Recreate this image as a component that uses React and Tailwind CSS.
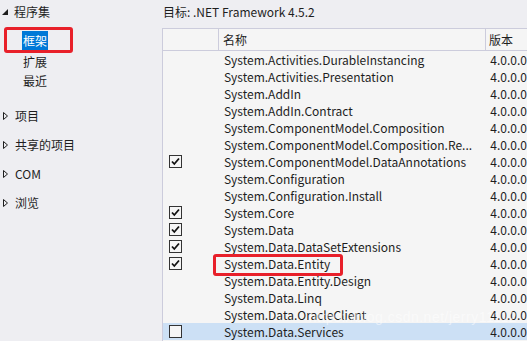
import React from "react";

const rows = [
  { name: "System.Activities.DurableInstancing" },
  { name: "System.Activities.Presentation" },
  { name: "System.AddIn" },
  { name: "System.AddIn.Contract" },
  { name: "System.ComponentModel.Composition" },
  { name: "System.ComponentModel.Composition.Re..." },
  { name: "System.ComponentModel.DataAnnotations", checked: true },
  { name: "System.Configuration" },
  { name: "System.Configuration.Install" },
  { name: "System.Core", checked: true },
  { name: "System.Data", checked: true },
  { name: "System.Data.DataSetExtensions", checked: true },
  { name: "System.Data.Entity", checked: true, marked: true },
  { name: "System.Data.Entity.Design" },
  { name: "System.Data.Linq" },
  { name: "System.Data.OracleClient" },
  { name: "System.Data.Services", box: true, selected: true },
];

function Expanded() {
  return (
    <svg width="6" height="6" viewBox="0 0 6 6" className="shrink-0">
      <path d="M6 0 L6 6 L0 6 Z" fill="#1e1e1e" />
    </svg>
  );
}

function Collapsed() {
  return (
    <svg width="5" height="8" viewBox="0 0 5 8" className="shrink-0">
      <path d="M0.5 0.5 L4.5 4 L0.5 7.5 Z" fill="none" stroke="#1e1e1e" strokeWidth="1" />
    </svg>
  );
}

function Check({ on }) {
  return (
    <div className="w-[13px] h-[13px] border border-[#333] bg-[#f5f5f5] flex items-center justify-center">
      {on && (
        <svg width="11" height="11" viewBox="0 0 11 11">
          <path d="M2 5.5 L4.3 8 L9 2.5" fill="none" stroke="#111" strokeWidth="1.8" />
        </svg>
      )}
    </div>
  );
}

function TreeItem({ label, top }) {
  return (
    <div className={`flex items-center gap-[7px] pl-[3px] h-[17px] ${top}`}>
      <Collapsed />
      <span>{label}</span>
    </div>
  );
}

export default function App() {
  return (
    <div
      className="w-[527px] h-[341px] flex overflow-hidden bg-[#eeeef2] text-[12px] text-[#1e1e1e]"
      style={{ fontFamily: '"Noto Sans CJK SC", "Noto Sans", sans-serif' }}
    >
      <div className="w-[162px] shrink-0 pt-[3px]">
        <div className="flex items-center gap-[6px] pl-[2px] h-[17px]">
          <Expanded />
          <span>程序集</span>
        </div>
        <div className="mt-[7px] ml-[4px] w-[69px] h-[26px] border-[3px] border-[#e8202a] rounded-[3px] flex items-center pl-[15px]">
          <span className="bg-[#0078d7] text-white px-[1px] leading-[19px]">框架</span>
        </div>
        <div className="pl-[23px] h-[18px] leading-[18px]">扩展</div>
        <div className="pl-[23px] h-[20px] leading-[20px]">最近</div>
        <TreeItem label="项目" top="mt-[16px]" />
        <TreeItem label="共享的项目" top="mt-[12px]" />
        <TreeItem label="COM" top="mt-[12px]" />
        <TreeItem label="浏览" top="mt-[12px]" />
      </div>

      <div className="flex-1 flex flex-col min-w-0">
        <div className="h-[28px] leading-[24px] pl-[1px]">目标: .NET Framework 4.5.2</div>
        <div className="relative flex-1 bg-[#f5f5f5] border-t border-l border-[#ccccdc]">
          <div className="flex h-[22px] border-b border-[#ccccdc] leading-[21px]">
            <div className="w-[56px] border-r border-[#ccccdc]" />
            <div className="w-[267px] border-r border-[#ccccdc] pl-[4px]">名称</div>
            <div className="pl-[3px]">版本</div>
          </div>
          {rows.map((r) => (
            <div
              key={r.name}
              className={`relative flex h-[17px] leading-[17px] items-center ${r.selected ? "bg-[#cce0f5]" : ""}`}
            >
              <div className="w-[57px] pl-[6px] flex items-center">
                {(r.checked || r.box) && <Check on={r.checked} />}
              </div>
              <div className="w-[267px] pl-[4px] whitespace-nowrap overflow-hidden">{r.name}</div>
              <div className="pl-[4px]">4.0.0.0</div>
              {r.marked && (
                <div className="absolute left-[50px] top-[-1px] w-[130px] h-[22px] border-[3px] border-[#e8202a] rounded-[3px]" />
              )}
            </div>
          ))}
          <div
            className="absolute right-[10px] bottom-[13px] text-[14px] text-white/50 tracking-[0.5px]"
            style={{ fontFamily: '"Liberation Sans", sans-serif' }}
          >
            https://blog.csdn.net/jerry11112
          </div>
        </div>
      </div>
    </div>
  );
}
